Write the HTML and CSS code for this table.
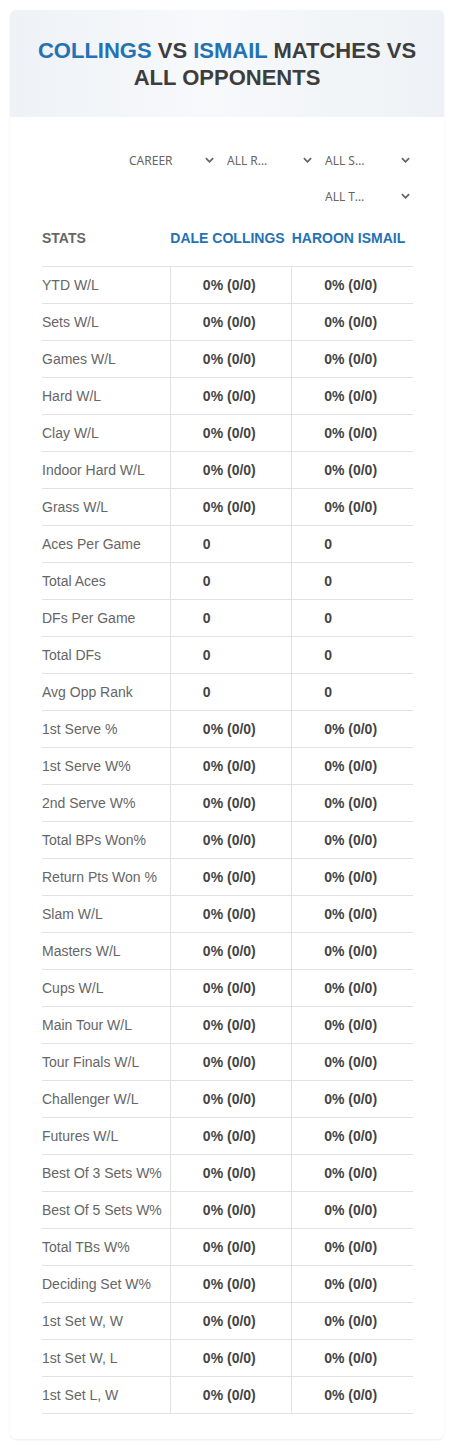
FILE: index.html
```html
<!DOCTYPE html>
<html lang="en">
<head>
    <meta charset="UTF-8">
    <meta name="viewport" content="width=device-width, initial-scale=1.0">
    <title>Collings vs Ismail matches vs all opponents</title>
    <link rel="stylesheet" href="styles.css">
</head>
<body>
    <div class="card">
        <div class="card-header">
            <h1><span class="player">Collings</span> vs <span class="player">Ismail</span> matches vs all opponents</h1>
        </div>

        <div class="filters">
            <div class="select"><span class="select-text">Career</span><svg class="chevron" viewBox="0 0 10 6"><path d="M1 1l4 4 4-4" /></svg></div>
            <div class="select"><span class="select-text">All Rounds</span><svg class="chevron" viewBox="0 0 10 6"><path d="M1 1l4 4 4-4" /></svg></div>
            <div class="select"><span class="select-text">All Surfaces</span><svg class="chevron" viewBox="0 0 10 6"><path d="M1 1l4 4 4-4" /></svg></div>
            <div class="select"><span class="select-text">All Tournaments</span><svg class="chevron" viewBox="0 0 10 6"><path d="M1 1l4 4 4-4" /></svg></div>
        </div>

        <table class="stats-table">
            <thead>
                <tr>
                    <th class="label-col">Stats</th>
                    <th class="player-col">Dale Collings</th>
                    <th class="player-col">Haroon Ismail</th>
                </tr>
            </thead>
            <tbody>
                <tr><td>YTD W/L</td><td>0% (0/0)</td><td>0% (0/0)</td></tr>
                <tr><td>Sets W/L</td><td>0% (0/0)</td><td>0% (0/0)</td></tr>
                <tr><td>Games W/L</td><td>0% (0/0)</td><td>0% (0/0)</td></tr>
                <tr><td>Hard W/L</td><td>0% (0/0)</td><td>0% (0/0)</td></tr>
                <tr><td>Clay W/L</td><td>0% (0/0)</td><td>0% (0/0)</td></tr>
                <tr><td>Indoor Hard W/L</td><td>0% (0/0)</td><td>0% (0/0)</td></tr>
                <tr><td>Grass W/L</td><td>0% (0/0)</td><td>0% (0/0)</td></tr>
                <tr><td>Aces Per Game</td><td>0</td><td>0</td></tr>
                <tr><td>Total Aces</td><td>0</td><td>0</td></tr>
                <tr><td>DFs Per Game</td><td>0</td><td>0</td></tr>
                <tr><td>Total DFs</td><td>0</td><td>0</td></tr>
                <tr><td>Avg Opp Rank</td><td>0</td><td>0</td></tr>
                <tr><td>1st Serve %</td><td>0% (0/0)</td><td>0% (0/0)</td></tr>
                <tr><td>1st Serve W%</td><td>0% (0/0)</td><td>0% (0/0)</td></tr>
                <tr><td>2nd Serve W%</td><td>0% (0/0)</td><td>0% (0/0)</td></tr>
                <tr><td>Total BPs Won%</td><td>0% (0/0)</td><td>0% (0/0)</td></tr>
                <tr><td>Return Pts Won %</td><td>0% (0/0)</td><td>0% (0/0)</td></tr>
                <tr><td>Slam W/L</td><td>0% (0/0)</td><td>0% (0/0)</td></tr>
                <tr><td>Masters W/L</td><td>0% (0/0)</td><td>0% (0/0)</td></tr>
                <tr><td>Cups W/L</td><td>0% (0/0)</td><td>0% (0/0)</td></tr>
                <tr><td>Main Tour W/L</td><td>0% (0/0)</td><td>0% (0/0)</td></tr>
                <tr><td>Tour Finals W/L</td><td>0% (0/0)</td><td>0% (0/0)</td></tr>
                <tr><td>Challenger W/L</td><td>0% (0/0)</td><td>0% (0/0)</td></tr>
                <tr><td>Futures W/L</td><td>0% (0/0)</td><td>0% (0/0)</td></tr>
                <tr><td>Best Of 3 Sets W%</td><td>0% (0/0)</td><td>0% (0/0)</td></tr>
                <tr><td>Best Of 5 Sets W%</td><td>0% (0/0)</td><td>0% (0/0)</td></tr>
                <tr><td>Total TBs W%</td><td>0% (0/0)</td><td>0% (0/0)</td></tr>
                <tr><td>Deciding Set W%</td><td>0% (0/0)</td><td>0% (0/0)</td></tr>
                <tr><td>1st Set W, W</td><td>0% (0/0)</td><td>0% (0/0)</td></tr>
                <tr><td>1st Set W, L</td><td>0% (0/0)</td><td>0% (0/0)</td></tr>
                <tr><td>1st Set L, W</td><td>0% (0/0)</td><td>0% (0/0)</td></tr>
            </tbody>
        </table>
    </div>
</body>
</html>
```

FILE: styles.css
```css
body {
    font-family: "Liberation Sans", Arial, sans-serif;
    margin: 0;
    padding: 10px 11px 10px 10px;
    background-color: #fff;
}
.card {
    background: #fff;
    border-radius: 6px;
    box-shadow: 0 1px 2px rgba(0, 0, 0, 0.08);
    padding-bottom: 25px;
}
.card-header {
    height: 107px;
    display: flex;
    align-items: center;
    justify-content: center;
    border-radius: 6px 6px 0 0;
    background: linear-gradient(90deg, #eef2f7 0%, #f7f9fb 45%, #f2f5f8 75%, #eef2f6 100%);
}
h1 {
    margin: 0;
    padding: 0 20px;
    text-align: center;
    font-size: 22px;
    line-height: 27px;
    font-weight: bold;
    text-transform: uppercase;
    color: #3d3d3d;
}
.player {
    color: #2472b3;
}
.filters {
    display: flex;
    flex-wrap: wrap;
    justify-content: flex-end;
    gap: 8px 10px;
    padding: 29px 31px 0 32px;
}
.select {
    width: 88px;
    height: 28px;
    display: flex;
    align-items: center;
    justify-content: space-between;
    font-family: "Noto Sans", sans-serif;
    font-size: 12px;
    color: #666;
    text-transform: uppercase;
}
.select-text {
    width: 48px;
    white-space: nowrap;
    overflow: hidden;
    text-overflow: ellipsis;
}
.chevron {
    width: 9px;
    height: 6px;
    margin-right: 3px;
    fill: none;
    stroke: #666;
    stroke-width: 2;
}
.stats-table {
    margin: 10px 31px 0 32px;
    width: calc(100% - 63px);
    border-collapse: collapse;
    font-size: 14px;
}
.stats-table th {
    text-align: left;
    font-weight: bold;
    text-transform: uppercase;
    padding: 10px 0 20px;
    border-bottom: 1px solid #e2e2e2;
}
.label-col {
    width: 128px;
    color: #666;
}
.player-col {
    width: 121px;
    color: #2472b3;
}
.stats-table td {
    height: 36px;
    padding: 0;
    border-bottom: 1px solid #e2e2e2;
    color: #666;
}
.stats-table td + td {
    border-left: 1px solid #e2e2e2;
    padding-left: 32px;
    font-weight: bold;
    color: #444;
}
```
